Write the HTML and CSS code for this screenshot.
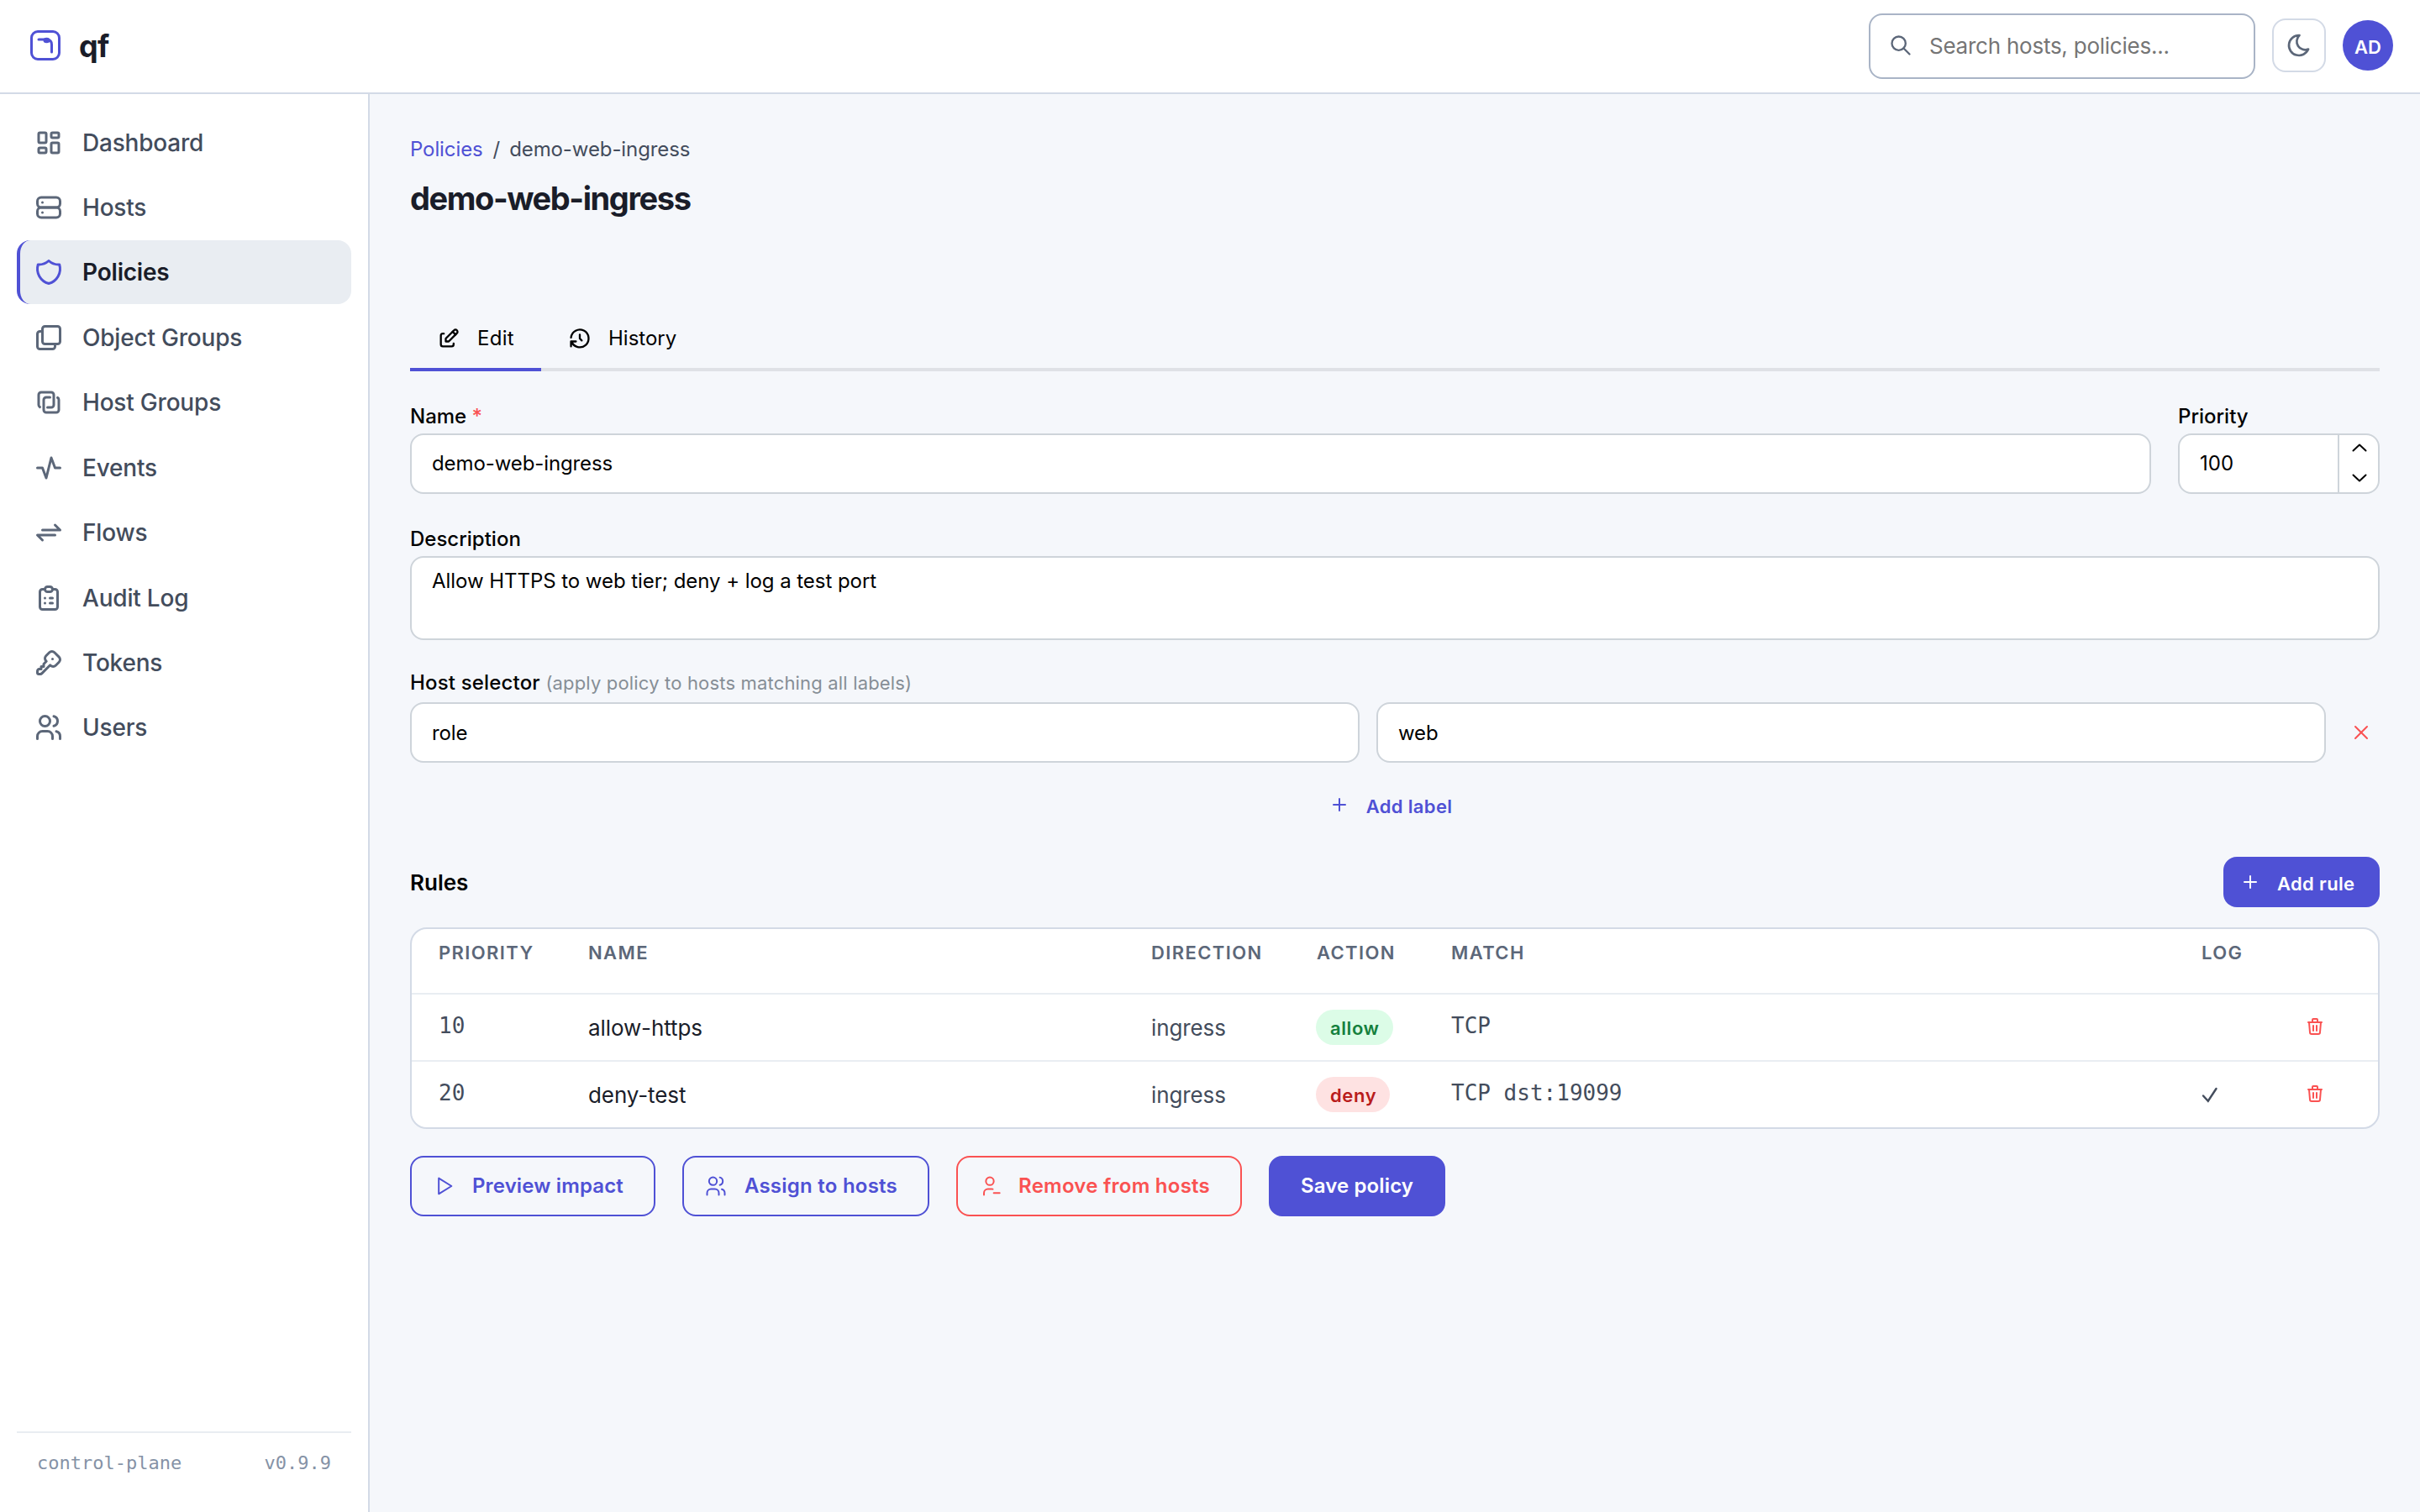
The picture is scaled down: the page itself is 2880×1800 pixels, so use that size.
FILE: index.html
```html
<!DOCTYPE html>
<html lang="en">
<head>
  <meta charset="UTF-8">
  <meta name="viewport" content="width=device-width, initial-scale=1.0">
  <title>demo-web-ingress - qf</title>
  <link rel="stylesheet" href="styles.css">
</head>
<body>
  <header class="topbar">
    <a class="brand" href="#">
      <svg class="brand-logo" viewBox="0 0 36 36">
        <rect x="1.5" y="1.5" width="33" height="33" rx="7.5" />
        <path d="M10 11h10c4 .4 5.5 2.6 5.5 6v9" />
        <ellipse class="dot" cx="19.5" cy="12" rx="4" ry="3.2" />
      </svg>
      <span class="brand-name">qf</span>
    </a>
    <div class="topbar-right">
      <label class="search">
        <svg class="icon" viewBox="0 0 24 24"><circle cx="10" cy="10" r="7" /><path d="M21 21l-6 -6" /></svg>
        <input type="text" placeholder="Search hosts, policies...">
      </label>
      <button class="theme-button" type="button" aria-label="Toggle theme">
        <svg class="icon" viewBox="0 0 24 24"><path d="M12 3c.132 0 .263 0 .393 0a7.5 7.5 0 0 0 7.92 12.446a9 9 0 1 1 -8.313 -12.454z" /></svg>
      </button>
      <div class="avatar"><span>AD</span></div>
    </div>
  </header>

  <div class="layout">
    <aside class="sidebar">
      <nav class="nav">
        <a class="nav-item" href="#">
          <svg class="icon" viewBox="0 0 24 24"><path d="M5 4h4a1 1 0 0 1 1 1v6a1 1 0 0 1 -1 1h-4a1 1 0 0 1 -1 -1v-6a1 1 0 0 1 1 -1" /><path d="M5 16h4a1 1 0 0 1 1 1v2a1 1 0 0 1 -1 1h-4a1 1 0 0 1 -1 -1v-2a1 1 0 0 1 1 -1" /><path d="M15 12h4a1 1 0 0 1 1 1v6a1 1 0 0 1 -1 1h-4a1 1 0 0 1 -1 -1v-6a1 1 0 0 1 1 -1" /><path d="M15 4h4a1 1 0 0 1 1 1v2a1 1 0 0 1 -1 1h-4a1 1 0 0 1 -1 -1v-2a1 1 0 0 1 1 -1" /></svg>
          <span>Dashboard</span>
        </a>
        <a class="nav-item" href="#">
          <svg class="icon" viewBox="0 0 24 24"><rect x="3" y="4" width="18" height="8" rx="3" /><rect x="3" y="12" width="18" height="8" rx="3" /><path d="M7 8v.01" /><path d="M7 16v.01" /></svg>
          <span>Hosts</span>
        </a>
        <a class="nav-item active" href="#">
          <svg class="icon" viewBox="0 0 24 24"><path d="M12 3a12 12 0 0 0 8.5 3a12 12 0 0 1 -8.5 15a12 12 0 0 1 -8.5 -15a12 12 0 0 0 8.5 -3" /></svg>
          <span>Policies</span>
        </a>
        <a class="nav-item" href="#">
          <svg class="icon" viewBox="0 0 24 24"><rect x="7" y="3" width="14" height="14" rx="2" /><path d="M17 17v2a2 2 0 0 1 -2 2h-10a2 2 0 0 1 -2 -2v-10a2 2 0 0 1 2 -2h2" /></svg>
          <span>Object Groups</span>
        </a>
        <a class="nav-item" href="#">
          <svg class="icon" viewBox="0 0 24 24"><path d="M19 8.268a2 2 0 0 1 1 1.732v8a2 2 0 0 1 -2 2h-8a2 2 0 0 1 -2 -2v-8a2 2 0 0 1 2 -2h3" /><path d="M5 15.734a2 2 0 0 1 -1 -1.734v-8a2 2 0 0 1 2 -2h8a2 2 0 0 1 2 2v8a2 2 0 0 1 -2 2h-3" /></svg>
          <span>Host Groups</span>
        </a>
        <a class="nav-item" href="#">
          <svg class="icon" viewBox="0 0 24 24"><path d="M3 12h4l3 8l4 -16l3 8h4" /></svg>
          <span>Events</span>
        </a>
        <a class="nav-item" href="#">
          <svg class="icon" viewBox="0 0 24 24"><path d="M7 10h14l-4 -4" /><path d="M17 14h-14l4 4" /></svg>
          <span>Flows</span>
        </a>
        <a class="nav-item" href="#">
          <svg class="icon" viewBox="0 0 24 24"><path d="M9 5h-2a2 2 0 0 0 -2 2v12a2 2 0 0 0 2 2h10a2 2 0 0 0 2 -2v-12a2 2 0 0 0 -2 -2h-2" /><rect x="9" y="3" width="6" height="4" rx="2" /><path d="M9 12h.01" /><path d="M13 12h2" /><path d="M9 16h.01" /><path d="M13 16h2" /></svg>
          <span>Audit Log</span>
        </a>
        <a class="nav-item" href="#">
          <svg class="icon" viewBox="0 0 24 24"><path d="M16.555 3.843l3.602 3.602a2.877 2.877 0 0 1 0 4.069l-2.643 2.643a2.877 2.877 0 0 1 -4.069 0l-.301 -.301l-6.558 6.558a2 2 0 0 1 -1.239 .578l-.175 .008h-1.172a1 1 0 0 1 -.993 -.883l-.007 -.117v-1.172a2 2 0 0 1 .467 -1.284l.119 -.13l.414 -.414h2v-2h2v-2l2.144 -2.144l-.301 -.301a2.877 2.877 0 0 1 0 -4.069l2.643 -2.643a2.877 2.877 0 0 1 4.069 0z" /><path d="M15 9h.01" /></svg>
          <span>Tokens</span>
        </a>
        <a class="nav-item" href="#">
          <svg class="icon" viewBox="0 0 24 24"><circle cx="9" cy="7" r="4" /><path d="M3 21v-2a4 4 0 0 1 4 -4h4a4 4 0 0 1 4 4v2" /><path d="M16 3.13a4 4 0 0 1 0 7.75" /><path d="M21 21v-2a4 4 0 0 0 -3 -3.85" /></svg>
          <span>Users</span>
        </a>
      </nav>
      <div class="sidebar-footer">
        <span>control-plane</span>
        <span>v0.9.9</span>
      </div>
    </aside>

    <main class="content">
      <div class="breadcrumb">
        <a href="#">Policies</a>
        <span class="separator">/</span>
        <span>demo-web-ingress</span>
      </div>
      <h1 class="title">demo-web-ingress</h1>

      <div class="tabs">
        <button class="tab active" type="button">
          <svg class="icon" viewBox="0 0 24 24"><path d="M7 7h-1a2 2 0 0 0 -2 2v9a2 2 0 0 0 2 2h9a2 2 0 0 0 2 -2v-1" /><path d="M20.385 6.585a2.1 2.1 0 0 0 -2.97 -2.97l-8.415 8.385v3h3l8.385 -8.415z" /><path d="M16 5l3 3" /></svg>
          <span>Edit</span>
        </button>
        <button class="tab" type="button">
          <svg class="icon" viewBox="0 0 24 24"><path d="M12 8v4l2 2" /><path d="M3.05 11a9 9 0 1 1 .5 4m-.5 5v-5h5" /></svg>
          <span>History</span>
        </button>
      </div>

      <form class="policy-form">
        <div class="field-row">
          <div class="field grow">
            <label for="name">Name <span class="required">*</span></label>
            <input class="input" id="name" type="text" value="demo-web-ingress">
          </div>
          <div class="field priority">
            <label for="priority">Priority</label>
            <div class="input number-input">
              <input id="priority" type="text" value="100">
              <div class="controls">
                <svg viewBox="0 0 18 10"><path d="M1.5 8.5l7.5 -7l7.5 7" /></svg>
                <svg viewBox="0 0 18 10"><path d="M1.5 1.5l7.5 7l7.5 -7" /></svg>
              </div>
            </div>
          </div>
        </div>

        <div class="field description">
          <label for="description">Description</label>
          <textarea class="input" id="description">Allow HTTPS to web tier; deny + log a test port</textarea>
        </div>

        <div class="field selector">
          <label for="label-key">Host selector <span class="hint">(apply policy to hosts matching all labels)</span></label>
          <div class="selector-row">
            <input class="input" id="label-key" type="text" value="role">
            <input class="input" type="text" value="web">
            <button class="remove-label" type="button" aria-label="Remove label">
              <svg class="icon" viewBox="0 0 24 24"><path d="M18 6l-12 12" /><path d="M6 6l12 12" /></svg>
            </button>
          </div>
          <button class="add-label" type="button">
            <svg class="icon" viewBox="0 0 24 24"><path d="M12 5v14" /><path d="M5 12h14" /></svg>
            <span>Add label</span>
          </button>
        </div>

        <div class="rules-header">
          <h2>Rules</h2>
          <button class="add-rule" type="button">
            <svg class="icon" viewBox="0 0 24 24"><path d="M12 5v14" /><path d="M5 12h14" /></svg>
            <span>Add rule</span>
          </button>
        </div>

        <div class="rules-card">
          <table class="rules">
            <colgroup>
              <col class="col-priority">
              <col class="col-name">
              <col class="col-direction">
              <col class="col-action">
              <col class="col-match">
              <col class="col-log">
              <col class="col-delete">
            </colgroup>
            <thead>
              <tr>
                <th>Priority</th>
                <th>Name</th>
                <th>Direction</th>
                <th>Action</th>
                <th>Match</th>
                <th>Log</th>
                <th></th>
              </tr>
            </thead>
            <tbody>
              <tr>
                <td class="mono">10</td>
                <td class="rule-name">allow-https</td>
                <td>ingress</td>
                <td><span class="badge allow">allow</span></td>
                <td class="mono">TCP</td>
                <td></td>
                <td class="delete">
                  <svg class="icon" viewBox="0 0 24 24"><path d="M4 7h16" /><path d="M10 11v6" /><path d="M14 11v6" /><path d="M5 7l1 12a2 2 0 0 0 2 2h8a2 2 0 0 0 2 -2l1 -12" /><path d="M9 7v-3a1 1 0 0 1 1 -1h4a1 1 0 0 1 1 1v3" /></svg>
                </td>
              </tr>
              <tr>
                <td class="mono">20</td>
                <td class="rule-name">deny-test</td>
                <td>ingress</td>
                <td><span class="badge deny">deny</span></td>
                <td class="mono">TCP dst:19099</td>
                <td><svg class="check" viewBox="0 0 20 20"><path d="M2 11.5l5.8 6.2l9.7 -14.7" /></svg></td>
                <td class="delete">
                  <svg class="icon" viewBox="0 0 24 24"><path d="M4 7h16" /><path d="M10 11v6" /><path d="M14 11v6" /><path d="M5 7l1 12a2 2 0 0 0 2 2h8a2 2 0 0 0 2 -2l1 -12" /><path d="M9 7v-3a1 1 0 0 1 1 -1h4a1 1 0 0 1 1 1v3" /></svg>
                </td>
              </tr>
            </tbody>
          </table>
        </div>

        <div class="actions">
          <button class="button outline preview" type="button">
            <svg class="icon" viewBox="0 0 24 24"><path d="M7 4v16l13 -8z" /></svg>
            <span>Preview impact</span>
          </button>
          <button class="button outline assign" type="button">
            <svg class="icon" viewBox="0 0 24 24"><circle cx="9" cy="7" r="4" /><path d="M3 21v-2a4 4 0 0 1 4 -4h4a4 4 0 0 1 4 4v2" /><path d="M16 3.13a4 4 0 0 1 0 7.75" /><path d="M21 21v-2a4 4 0 0 0 -3 -3.85" /></svg>
            <span>Assign to hosts</span>
          </button>
          <button class="button danger" type="button">
            <svg class="icon" viewBox="0 0 24 24"><circle cx="12" cy="7" r="4" /><path d="M6 21v-2a4 4 0 0 1 4 -4h4c.348 0 .686 .045 1.009 .128" /><path d="M16 19h6" /></svg>
            <span>Remove from hosts</span>
          </button>
          <button class="button primary" type="button"><span>Save policy</span></button>
        </div>
      </form>
    </main>
  </div>
</body>
</html>
```
FILE: styles.css
```css
* {
  box-sizing: border-box;
}

body {
  margin: 0;
  height: 1800px;
  display: flex;
  flex-direction: column;
  background-color: #f5f7fb;
  color: #000;
  font-family: Inter, sans-serif;
  font-size: 24px;
}

a {
  text-decoration: none;
}

button {
  font-family: inherit;
  margin: 0;
  padding: 0;
  border: none;
  background: none;
  cursor: pointer;
}

.icon {
  display: block;
  flex-shrink: 0;
  width: 28px;
  height: 28px;
  fill: none;
  stroke: currentColor;
  stroke-width: 2;
  stroke-linecap: round;
  stroke-linejoin: round;
}

/* top bar */
.topbar {
  display: flex;
  flex-shrink: 0;
  align-items: center;
  justify-content: space-between;
  height: 112px;
  padding: 0 32px 2px 36px;
  background-color: #fff;
  border-bottom: 2px solid #d3dae6;
}

.brand {
  display: flex;
  align-items: center;
  gap: 22px;
  color: #1a1d29;
}

.brand-logo {
  width: 36px;
  height: 36px;
  fill: none;
  stroke: #4f51d5;
  stroke-width: 3;
  stroke-linecap: round;
}

.brand-logo .dot {
  fill: #4f51d5;
  stroke: none;
}

.brand-name {
  padding-top: 2px;
  font-size: 36px;
  font-weight: 700;
  letter-spacing: -0.02em;
}

.topbar-right {
  display: flex;
  align-items: center;
  gap: 20px;
}

.search {
  display: flex;
  align-items: center;
  gap: 20px;
  width: 460px;
  height: 78px;
  margin-top: 2px;
  padding: 0 22px 2px;
  border: 2px solid #a9b4c6;
  border-radius: 16px;
  color: #5c6779;
}

.search input {
  width: 100%;
  border: none;
  padding: 1px 0 0;
  outline: none;
  font-family: inherit;
  font-size: 26px;
  letter-spacing: -0.24px;
}

.search input::placeholder {
  color: #757575;
}

.theme-button {
  display: flex;
  align-items: center;
  justify-content: center;
  width: 64px;
  height: 64px;
  border: 2px solid #d3dae6;
  border-radius: 16px;
  color: #5c6779;
}

.theme-button .icon {
  width: 32px;
  height: 32px;
}

.avatar {
  display: flex;
  align-items: center;
  justify-content: center;
  width: 60px;
  height: 60px;
  padding-top: 3px;
  border-radius: 50%;
  background-color: #4f51d5;
  color: #fff;
  font-size: 22px;
  font-weight: 600;
}

.layout {
  flex: 1;
  display: flex;
}

/* sidebar */
.sidebar {
  display: flex;
  flex-direction: column;
  justify-content: space-between;
  width: 440px;
  padding: 19.6px 20px 46px;
  background-color: #fff;
  border-right: 2px solid #d3dae6;
}

.nav {
  display: flex;
  flex-direction: column;
  gap: 2px;
}

.nav-item {
  display: flex;
  align-items: center;
  gap: 22px;
  height: 75.4px;
  padding: 1px 0 0 16px;
  border-left: 4px solid transparent;
  border-radius: 16px;
  color: #434c5c;
  font-size: 28px;
  font-weight: 500;
  letter-spacing: -0.2px;
}

.nav-item .icon {
  width: 36px;
  height: 36px;
  color: #5c6779;
}

.nav-item.active {
  padding-top: 0;
  background-color: #e9edf2;
  border-left-color: #4f51d5;
  color: #1a1d29;
  font-weight: 600;
}

.nav-item.active .icon {
  color: #4f51d5;
}

.sidebar-footer {
  display: flex;
  justify-content: space-between;
  padding: 23px 24px 0;
  border-top: 2px solid #e9edf2;
  color: #8592a6;
  font-family: "DejaVu Sans Mono", monospace;
  font-size: 22px;
}

/* page */
.content {
  flex: 1;
  padding: 50px 48px 0;
}

.breadcrumb {
  display: flex;
  line-height: 32px;
  letter-spacing: -0.1px;
  color: #434c5c;
}

.breadcrumb a {
  color: #4f51d5;
}

.breadcrumb .separator {
  margin: 0 11px 0 12px;
}

.title {
  margin: 16px 0 0;
  color: #1a1d29;
  font-size: 38px;
  font-weight: 700;
  line-height: 52px;
  letter-spacing: -1.42px;
}

.tabs {
  display: flex;
  height: 76px;
  margin-top: 104px;
  box-shadow: inset 0 -4px #dfe1e6;
}

.tab {
  display: flex;
  align-items: center;
  gap: 20px;
  padding: 1px 32px 0;
  border-bottom: 4px solid transparent;
  color: #000;
  font-size: 24px;
}

.tab.active {
  width: 156px;
  border-bottom-color: #4f51d5;
  letter-spacing: 0.3px;
}

.field label {
  display: block;
  height: 36px;
  line-height: 32px;
  font-weight: 500;
}

.field-row {
  display: flex;
  gap: 32px;
  margin-top: 38px;
}

.grow {
  flex: 1;
}

.priority {
  width: 240px;
}

.required {
  color: #fa5252;
}

.hint {
  color: #868e96;
  font-size: 22px;
  font-weight: 400;
}

.input {
  display: block;
  width: 100%;
  height: 72px;
  padding: 0 24px;
  border: 2px solid #ced4da;
  border-radius: 16px;
  background-color: #fff;
  color: #000;
  font-family: inherit;
  font-size: 24px;
  letter-spacing: -0.1px;
  outline: none;
}

#name {
  padding-bottom: 2px;
}

textarea.input {
  height: 100px;
  padding: 9px 24px;
  line-height: 37px;
  letter-spacing: -0.05px;
  resize: none;
  overflow: hidden;
}

.number-input {
  display: flex;
  padding: 0;
}

.number-input input {
  flex: 1;
  min-width: 0;
  margin-left: 24px;
  padding: 0 0 2px;
  border: none;
  outline: none;
  background: none;
  font-family: inherit;
  font-size: 24px;
}

.controls {
  display: flex;
  flex-direction: column;
  align-items: center;
  justify-content: space-between;
  width: 48px;
  padding: 10px 0 12px 1px;
  border-left: 2px solid #ced4da;
}

.controls svg {
  width: 18px;
  height: 10px;
  fill: none;
  stroke: #000;
  stroke-width: 2;
  stroke-linecap: round;
  stroke-linejoin: round;
}

.description {
  margin-top: 38px;
}

.selector {
  margin-top: 32px;
}

.selector label {
  height: 42px;
  line-height: 37px;
  letter-spacing: 0.17px;
}

.selector-row {
  display: flex;
  gap: 20px;
}

.selector-row .input {
  flex: 1;
  padding-top: 1px;
}

.remove-label {
  display: flex;
  align-items: center;
  justify-content: center;
  width: 44px;
  color: #fa5252;
}

.remove-label .icon,
.button .icon {
  stroke-width: 1.7;
}

.add-label,
.add-rule {
  display: flex;
  align-items: center;
  gap: 20px;
  height: 60px;
  padding: 0 30px 0 20px;
  font-size: 22px;
  font-weight: 600;
  letter-spacing: 0.35px;
}

.add-label {
  justify-content: center;
  width: 100%;
  margin: 20px 0 32px;
  color: #4f51d5;
}

.add-rule {
  width: 186px;
  border-radius: 16px;
  background-color: #4f51d5;
  color: #fff;
  white-space: nowrap;
}

.add-label span,
.add-rule span {
  padding-top: 3px;
}

.add-label .icon,
.add-rule .icon {
  width: 24px;
  height: 24px;
}

/* rules */
.rules-header {
  display: flex;
  align-items: center;
  justify-content: space-between;
  margin-bottom: 24px;
}

.rules-header h2 {
  margin: 0;
  font-size: 26px;
  font-weight: 600;
}

.rules-card {
  border: 2px solid #d3dae6;
  border-radius: 20px;
  background-color: #fff;
  overflow: hidden;
}

.rules {
  width: 100%;
  table-layout: fixed;
  border-spacing: 0;
}

.col-priority { width: 178px; }
.col-name { width: 670px; }
.col-direction { width: 197px; }
.col-action { width: 160px; }
.col-match { width: 893px; }
.col-log { width: 123px; }

.rules th {
  height: 78px;
  padding: 15px 0 0 32px;
  border-bottom: 2px solid #e9edf2;
  color: #5c6779;
  font-size: 22px;
  font-weight: 600;
  line-height: 26px;
  letter-spacing: 0.063em;
  text-align: left;
  text-transform: uppercase;
  vertical-align: top;
}

.rules td {
  height: 80px;
  padding: 0 0 0 32px;
  border-bottom: 2px solid #e9edf2;
  color: #434c5c;
  font-size: 26px;
  letter-spacing: -0.1px;
}

.rules tbody tr:last-child td {
  height: 78px;
  border-bottom: none;
}

.rules .mono {
  padding-bottom: 4px;
  font-family: "DejaVu Sans Mono", monospace;
  letter-spacing: 0;
}

.rules .rule-name {
  color: #1a1d29;
}

.badge {
  display: block;
  width: fit-content;
  height: 42px;
  margin-left: -1px;
  padding: 0 16px 0 17px;
  border-radius: 21px;
  font-size: 22px;
  font-weight: 600;
  line-height: 44px;
  letter-spacing: 0.6px;
}

.badge.allow {
  background-color: #dcfce7;
  color: #15803d;
}

.badge.deny {
  background-color: #fee2e2;
  color: #b91c1c;
}

.check {
  display: block;
  width: 20px;
  height: 20px;
  fill: none;
  stroke: #434c5c;
  stroke-width: 2.4;
  stroke-linecap: round;
}

.delete .icon {
  width: 24px;
  height: 24px;
  margin-bottom: 2px;
  color: #fa5252;
}

/* form buttons */
.actions {
  display: flex;
  gap: 32px;
  margin-top: 32px;
}

.button {
  display: flex;
  align-items: center;
  gap: 20px;
  height: 72px;
  padding: 0 36px 1px 24px;
  border: 2px solid #4f51d5;
  border-radius: 16px;
  font-size: 24px;
  font-weight: 600;
  letter-spacing: 0.2px;
}

.button.outline {
  color: #4f51d5;
}

.button.preview {
  letter-spacing: 0.14px;
}

.button.assign {
  letter-spacing: 0.24px;
}

.button.danger {
  border-color: #fa5252;
  color: #fa5252;
  letter-spacing: 0.25px;
}

.button.primary {
  padding: 0 36px 1px;
  background-color: #4f51d5;
  color: #fff;
  letter-spacing: 0.12px;
}
```
